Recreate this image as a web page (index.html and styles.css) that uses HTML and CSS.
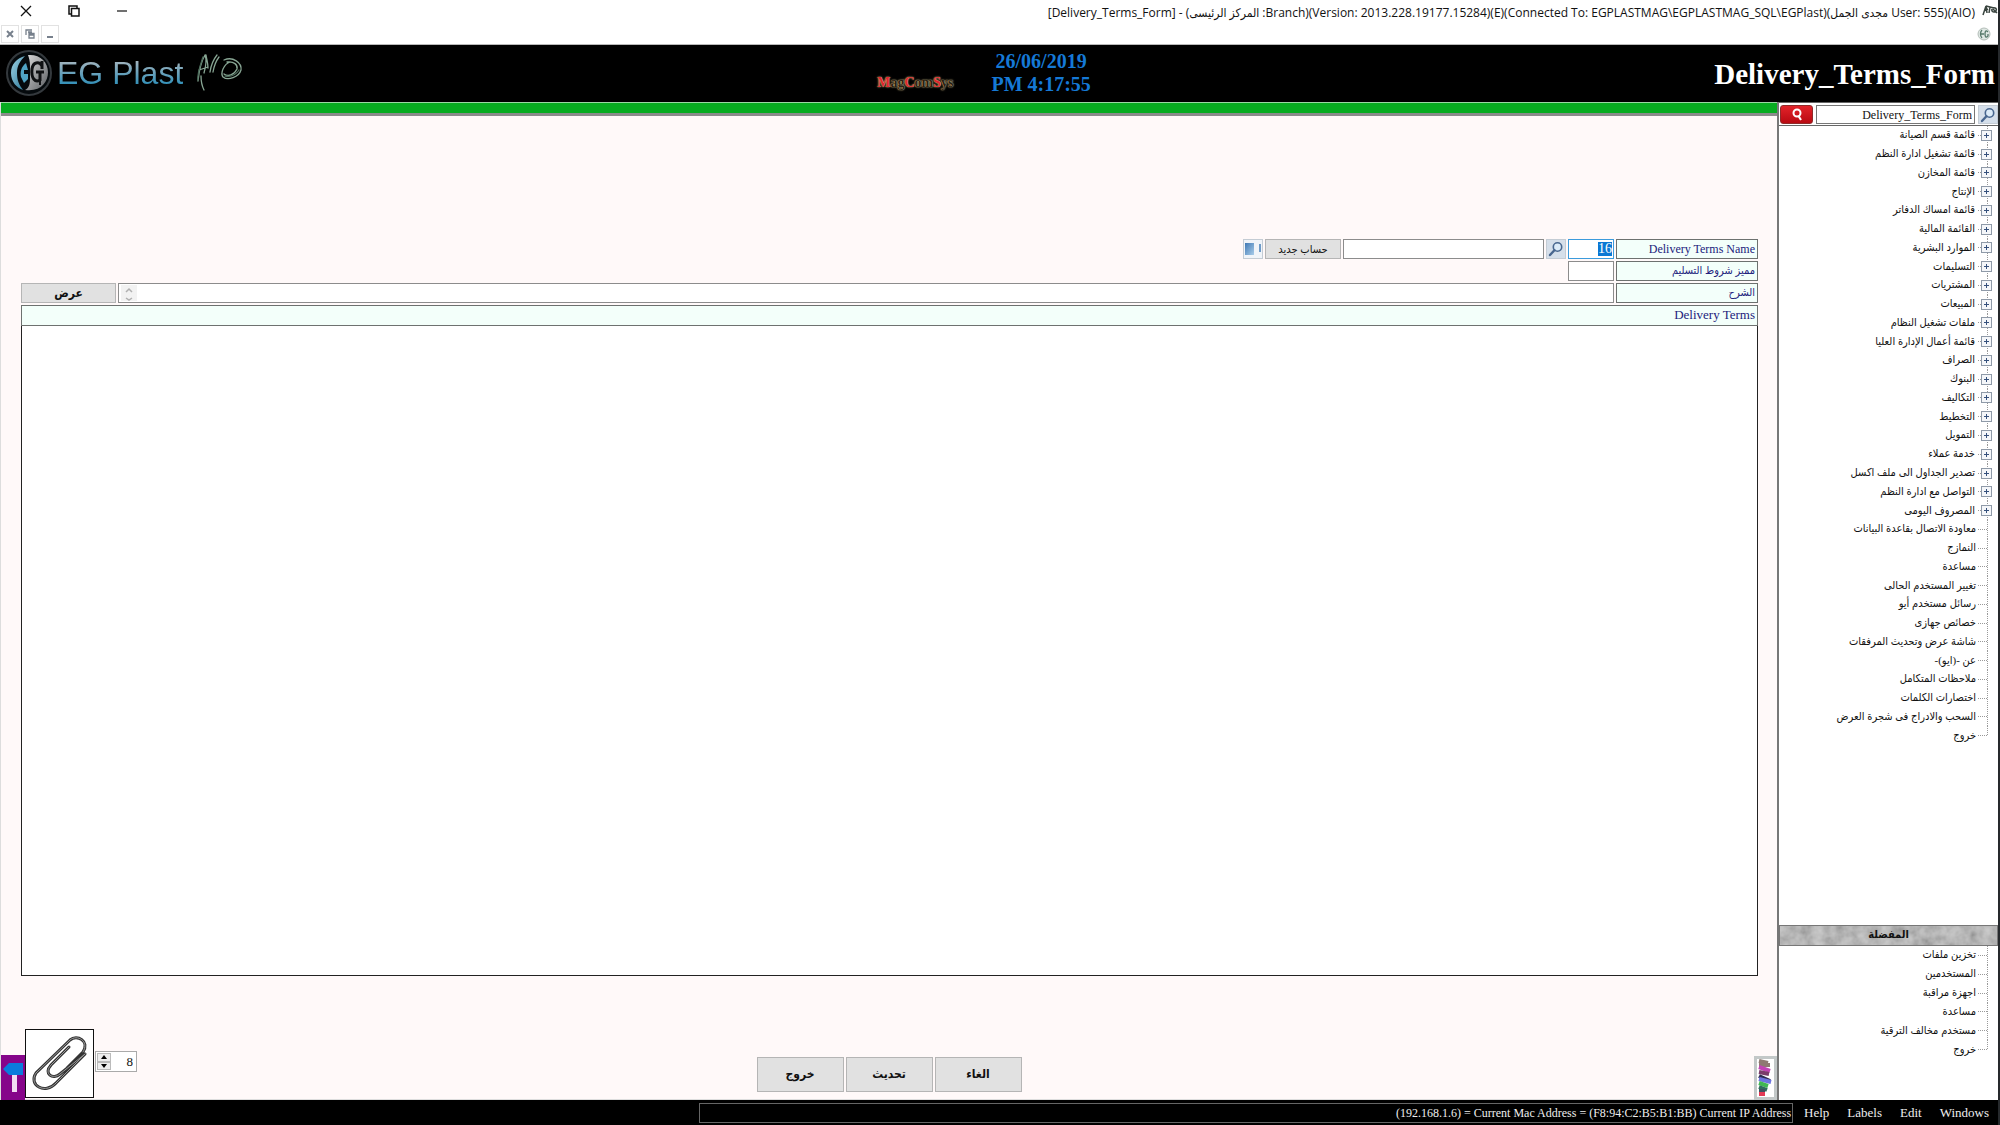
FILE: index.html
```html
<!DOCTYPE html>
<html lang="ar">
<head>
<meta charset="utf-8">
<title>Delivery_Terms_Form</title>
<link rel="stylesheet" href="styles.css">
</head>
<body>
<svg class="defs" aria-hidden="true">
  <symbol id="lens" viewBox="0 0 16 16">
    <circle cx="9.5" cy="6" r="4.2" fill="#dcebf8" stroke="#49678f" stroke-width="1.6"/>
    <path d="M6.4 9.2 2 14" stroke="#49678f" stroke-width="2.4" stroke-linecap="round"/>
  </symbol>
</svg>

<header class="titlebar">
  <div class="window-controls">
    <button aria-label="Close"><svg width="12" height="12" viewBox="0 0 12 12"><path d="M1 1 11 11M11 1 1 11" stroke="#111" stroke-width="1.3"/></svg></button>
    <button aria-label="Restore"><svg width="12" height="12" viewBox="0 0 12 12" fill="none" stroke="#111" stroke-width="1.5"><path d="M3 9H1V1h8v2"/><path d="M3.500 3.500h7.500v7.500h-7.500z"/></svg></button>
    <button aria-label="Minimize"><svg width="12" height="12" viewBox="0 0 12 12"><path d="M1 6h10" stroke="#111" stroke-width="1.2"/></svg></button>
  </div>
  <h1 class="window-title">[Delivery_Terms_Form] - (المركز الرئيسى :Branch)(Version: 2013.228.19177.15284)(E)(Connected To: EGPLASTMAG\EGPLASTMAG_SQL\EGPlast)(مجدى الجمل User: 555)(AIO)</h1>
  <svg class="app-icon" width="16" height="16" viewBox="0 0 16 16" fill="none" stroke="#39443f" stroke-width="1.500"><path d="M1 12 4 3l1 7M2 8l4-2M7 10 8 4M10 5c4-1 5 1 4 3s-5 1-4-2M4 3l8 2M11 6l4 4"/></svg>
</header>

<div class="mdi-bar">
  <div class="mdi-controls">
    <button aria-label="Close form"><svg width="10" height="10" viewBox="0 0 10 10"><path d="M2 2l6 6M8 2 2 8" stroke="#77808c" stroke-width="2"/></svg></button>
    <button aria-label="Restore form"><svg width="10" height="10" viewBox="0 0 10 10" fill="none" stroke="#77808c" stroke-width="1.300"><path d="M1 6V1h6M3 3h4M4 4.500h5V9H4zM4 6h5"/></svg></button>
    <button aria-label="Minimize form"><svg width="10" height="10" viewBox="0 0 10 10"><path d="M2 8h6" stroke="#77808c" stroke-width="2"/></svg></button>
  </div>
  <svg width="14" height="14" viewBox="0 0 14 14"><circle cx="7" cy="7" r="6" fill="#dfe8e4" stroke="#b4beb9"/><path d="M5 3c-2 2-2 6 0 8M3 7h4M11 5c-2-2-3-1-3 2s1 4 3 2V7" fill="none" stroke="#55786a" stroke-width="1.300"/></svg>
</div>

<div class="banner">
  <div class="brand">
    <svg width="48" height="48" viewBox="0 0 48 48">
      <defs>
        <linearGradient id="half" x1="0" y1="0" x2="1" y2="1"><stop offset="0" stop-color="#9fd4e6"/><stop offset="1" stop-color="#2a7797"/></linearGradient>
        <linearGradient id="steel" x1="0" y1="0" x2="1" y2="1"><stop offset="0" stop-color="#dcdcdc"/><stop offset="1" stop-color="#5c5f63"/></linearGradient>
      </defs>
      <circle cx="24" cy="24" r="22" fill="#050a0d" stroke="#34393d" stroke-width="2"/>
      <path d="M20 7C12 9 6 15 6 24s6 15 12 17c-4-5-6-10-6-17S15 12 20 7z" fill="url(#half)"/>
      <path d="M23 6c12-1 20 7 20 17S36 43 20 41c4-2 5-6 5-11V17c0-5-1-8-2-11z" fill="url(#steel)"/>
      <path d="M21 14c-5 4-6 9-5 14l3 6 4-4v-5h-4v-4h4z" fill="#4fa3c4"/>
      <path d="M37 17c-3-5-9-4-10 3-1 9 3 14 8 11v-8M31 23h8M37 12v8" fill="none" stroke="#101214" stroke-width="3"/>
      <path d="M35 31v5" stroke="#101214" stroke-width="2"/>
    </svg>
    <span class="brand-name">EG Plast</span>
    <svg width="48" height="42" viewBox="0 0 48 42" fill="none" stroke="#87a593" stroke-width="1.300" stroke-linecap="round">
      <path d="M2 29C3 20 6 8 9 3M9 3c2 5 1 11-1 18M5 24C5 29 6 34 8 38M3 18l9-3M10 3c1 6 2 8 2 13M14 20c1-7 3-12 7-17M17 20c1-6 3-11 6-15M28 8c9-4 18 3 17 10-2 7-13 11-18 7-3-4 1-13 7-15M31 10c7-1 11 3 10 7-3 6-9 8-13 5"/>
      <path d="M7 5c-3 9-6 17-5 23M43 18c-4 6-9 7-14 6" stroke="#4c6c5b"/>
    </svg>
  </div>
  <div class="banner-middle">
    <span class="vendor"><b>M</b>ag<b>C</b>om<b>S</b>ys</span>
    <time class="clock" datetime="2019-06-26T16:17:55">26/06/2019<br>PM 4:17:55</time>
  </div>
  <h2 class="form-title">Delivery_Terms_Form</h2>
</div>

<div class="workspace">
  <main class="panel">
    <div class="progress"></div>
    <form class="form" dir="rtl">
      <div class="row">
        <label class="field-label latin" for="code">Delivery Terms Name</label>
        <input class="code selected" id="code" value="16">
        <button class="icon-button" type="button" aria-label="Find"><svg width="16" height="16"><use href="#lens"/></svg></button>
        <input class="name" aria-label="Delivery terms name">
        <button class="new-account" type="button">حساب جديد</button>
        <button class="icon-button" type="button" aria-label="Panel"><svg width="18" height="18" viewBox="0 0 18 18"><defs><linearGradient id="pane" x1="0" y1="0" x2="1" y2="1"><stop offset="0" stop-color="#3f78b4"/><stop offset="1" stop-color="#a9cdea"/></linearGradient></defs><path d="M0 0h18v18H0z" fill="#f0f4f9"/><path d="M1 3h9v12H1z" fill="url(#pane)"/><path d="M16 4v8" stroke="#6f9bc8" stroke-width="2"/></svg></button>
      </div>
      <div class="row">
        <label class="field-label" for="mark">مميز شروط التسليم</label>
        <input class="code" id="mark">
      </div>
      <div class="row">
        <label class="field-label" for="desc">الشرح</label>
        <div class="memo">
          <input id="desc">
          <svg width="16" height="16" viewBox="0 0 16 16" fill="none" stroke="#b0b0b0" stroke-width="1.500"><path d="M0 0h16v16H0z" fill="#f2f2f2" stroke="none"/><path d="M5 7l3-3 3 3M5 13l3 2 3-2"/></svg>
        </div>
        <button class="show" type="button">عرض</button>
      </div>
      <label class="band" for="terms">Delivery Terms</label>
      <textarea class="terms" id="terms"></textarea>
    </form>
    <div class="toolbar">
      <div class="attachments">
        <button class="pin" aria-label="Pin"><svg width="24" height="45" viewBox="0 0 24 45"><path d="M2 14 8 8h14v12H8z" fill="#0a7bdc"/><path d="M11 20h5v17h-5z" fill="#f2dcf2"/></svg></button>
        <button class="clip" aria-label="Attachments"><svg width="66" height="66" viewBox="0 0 66 66" fill="none" stroke-linecap="round"><path d="M42 16 24 34c-8 9 2 15 9 9L58 23M58 23 29 52C18 64 1 54 9 42L43 9c7-6 20 1 13 12L40 37" stroke="#333" stroke-width="3"/><path d="M42 16 24 34c-8 9 2 15 9 9L58 23M58 23 29 52C18 64 1 54 9 42L43 9c7-6 20 1 13 12" stroke="#999" stroke-width="1"/></svg></button>
        <div class="spinner">
          <div class="steps">
            <button aria-label="Up"><svg width="6" height="4" viewBox="0 0 6 4"><path d="M0 4 3 0l3 4z"/></svg></button>
            <button aria-label="Down"><svg width="6" height="4" viewBox="0 0 6 4"><path d="M0 0h6L3 4z"/></svg></button>
          </div>
          <input aria-label="Copies" value="8">
        </div>
      </div>
      <div class="actions">
        <button>خروج</button>
        <button>تحديث</button>
        <button>الغاء</button>
      </div>
      <button class="palette" aria-label="Colours"><svg width="16" height="38" viewBox="0 0 16 38" fill="none" stroke-width="4"><path d="M1 2l9 2M1 6l11 0" stroke="#8f7a72"/><path d="M1 8l11 4" stroke="#c244b4"/><path d="M1 13l10 2" stroke="#7a3d6a"/><path d="M1 17l11 5" stroke="#2d2c50"/><path d="M1 20l12 3" stroke="#6d74e0"/><path d="M1 24l9 3" stroke="#41b852"/><path d="M1 28l8 3" stroke="#2f6d5c"/><path d="M1 32h6" stroke="#3c5360"/><path d="M1 35l6 0" stroke="#e23a55"/></svg></button>
    </div>
  </main>

  <aside class="sidebar">
    <div class="search">
      <button class="go" aria-label="Search"><svg width="14" height="14" viewBox="0 0 14 14" fill="none" stroke="#fff" stroke-width="2"><circle cx="7" cy="5" r="3.500"/><path d="M8.500 8 11 12"/></svg></button>
      <input aria-label="Form name" value="Delivery_Terms_Form">
      <button class="icon-button" aria-label="Lookup"><svg width="16" height="16"><use href="#lens"/></svg></button>
    </div>
    <ul class="tree main-tree" dir="rtl">
      <li class="branch"><a href="#">قائمة قسم الصيانة</a></li>
      <li class="branch"><a href="#">قائمة تشغيل ادارة النظم</a></li>
      <li class="branch"><a href="#">قائمة المخازن</a></li>
      <li class="branch"><a href="#">الإنتاج</a></li>
      <li class="branch"><a href="#">قائمة امساك الدفاتر</a></li>
      <li class="branch"><a href="#">القائمة المالية</a></li>
      <li class="branch"><a href="#">الموارد البشرية</a></li>
      <li class="branch"><a href="#">التسليمات</a></li>
      <li class="branch"><a href="#">المشتريات</a></li>
      <li class="branch"><a href="#">المبيعات</a></li>
      <li class="branch"><a href="#">ملفات تشغيل النظام</a></li>
      <li class="branch"><a href="#">قائمة أعمال الإدارة العليا</a></li>
      <li class="branch"><a href="#">الصراف</a></li>
      <li class="branch"><a href="#">البنوك</a></li>
      <li class="branch"><a href="#">التكاليف</a></li>
      <li class="branch"><a href="#">التخطيط</a></li>
      <li class="branch"><a href="#">التمويل</a></li>
      <li class="branch"><a href="#">خدمة عملاء</a></li>
      <li class="branch"><a href="#">تصدير الجداول الى ملف اكسل</a></li>
      <li class="branch"><a href="#">التواصل مع ادارة النظم</a></li>
      <li class="branch"><a href="#">المصروف اليومى</a></li>
      <li><a href="#">معاودة الاتصال بقاعدة البيانات</a></li>
      <li><a href="#">النمازج</a></li>
      <li><a href="#">مساعدة</a></li>
      <li><a href="#">تغيير المستخدم الحالى</a></li>
      <li><a href="#">رسائل مستخدم أيو</a></li>
      <li><a href="#">خصائص جهازى</a></li>
      <li><a href="#">شاشة عرض وتحديث المرفقات</a></li>
      <li><a href="#">عن -(ايو)-</a></li>
      <li><a href="#">ملاحظات المتكامل</a></li>
      <li><a href="#">اختصارات الكلمات</a></li>
      <li><a href="#">السحب والادراج فى شجرة العرض</a></li>
      <li><a href="#">خروج</a></li>
    </ul>
    <h3 class="favourites-title">
      <svg class="granite" aria-hidden="true"><filter id="stone"><feTurbulence type="fractalNoise" baseFrequency="0.09" numOctaves="3" seed="4"/><feColorMatrix values="0.4 0 0 0 0.42  0.4 0 0 0 0.42  0.4 0 0 0 0.42  0 0 0 0 1" color-interpolation-filters="sRGB"/></filter><rect width="100%" height="100%" filter="url(#stone)"/></svg>
      <span>المفضلة</span>
    </h3>
    <ul class="tree favourites" dir="rtl">
      <li><a href="#">تخزين ملفات</a></li>
      <li><a href="#">المستخدمين</a></li>
      <li><a href="#">اجهزة مراقبة</a></li>
      <li><a href="#">مساعدة</a></li>
      <li><a href="#">مستخدم مخالف الترقية</a></li>
      <li><a href="#">خروج</a></li>
    </ul>
  </aside>
</div>

<footer class="statusbar">
  <output class="status">(192.168.1.6) = Current Mac Address = (F8:94:C2:B5:B1:BB) Current IP Address</output>
  <nav class="menu">
    <a href="#">Help</a>
    <a href="#">Labels</a>
    <a href="#">Edit</a>
    <a href="#">Windows</a>
  </nav>
</footer>
</body>
</html>
```
FILE: styles.css
```css
* { box-sizing: border-box; }

body {
  margin: 0;
  min-height: 100vh;
  display: flex;
  flex-direction: column;
  border-right: 2px solid #26292c;
  background: #fff;
  font: 14px/18px "Liberation Serif", "DejaVu Sans Condensed", "DejaVu Sans", serif;
  color: #111;
}

button, input, textarea {
  font: inherit;
  color: inherit;
  margin: 0;
  padding: 0;
  border: 0;
  border-radius: 0;
  background: none;
  min-width: 0;
}
button { display: flex; align-items: center; justify-content: center; }
a { color: inherit; text-decoration: none; }
h1, h2, h3, ul { margin: 0; padding: 0; font-weight: normal; }
svg { display: block; flex: none; }
.defs { position: absolute; width: 0; height: 0; }

/* window chrome */
.titlebar { display: flex; align-items: center; height: 24px; padding: 0 0 2px 20px; gap: 7px; }
.window-controls { display: flex; gap: 36px; }
.window-title { flex: 1; padding-top: 4px; text-align: right; font: 12px/20px "Open Sans", "DejaVu Sans Condensed", "DejaVu Sans", sans-serif; white-space: nowrap; }
.mdi-bar { display: flex; align-items: center; justify-content: space-between; height: 21px; padding: 0 7px 0 1px; border-bottom: 1px solid #b9b9b9; }
.mdi-controls { display: flex; gap: 2px; }
.mdi-controls button { width: 18px; height: 18px; border: 1px solid #e2e2e2; }

/* banner */
.banner { display: grid; grid-template-columns: 1fr auto 1fr; align-items: center; height: 57px; padding: 0 3px 0 5px; background: #000; }
.brand { display: flex; align-items: center; gap: 4px; padding-bottom: 2px; }
.brand-name {
  margin-right: 9px;
  font: 32px/40px "Liberation Sans", sans-serif;
  color: transparent;
  background: linear-gradient(#a3b4be 20%, #2f8fb8 80%);
  background-clip: text;
}
.banner-middle { display: flex; align-items: center; gap: 38px; padding: 0 32px 2px 0; }
.vendor { padding-top: 20px; font: bold 14px/20px "Liberation Serif", serif; color: #2b2012; text-shadow: 0 0 1px #d8c58c, 0 0 2px #d8c58c; }
.vendor b { color: #e0262c; }
.clock { text-align: center; font: bold 20px/23px "Liberation Serif", serif; color: #1579d6; }
.form-title { text-align: right; font: bold 29px/40px "Liberation Serif", serif; color: #fff; }

/* workspace */
.workspace { flex: 1; display: flex; }
.panel { flex: 1; display: flex; flex-direction: column; background: #fff9f9; border-left: 1px solid #ddd; }
.progress { height: 14px; background: #07ac20; border-top: 1px solid #9bd8a3; border-bottom: 3px solid #8b8b8b; }
.form { flex: 1; display: flex; flex-direction: column; gap: 2px; padding: 123px 19px 53px 20px; }
.row { display: flex; gap: 2px; height: 20px; }
.field-label, .band { padding: 0 2px; background: #f3fffa; border: 1px solid #6d716f; color: #22227c; }
.field-label { width: 142px; font-size: 11px; line-height: 16px; }
.field-label.latin { font-size: 12px; line-height: 18px; }
.row input { border: 1px solid #8c8c8c; background: #fff; }
.row .code { width: 46px; padding: 0 1px; }
.row .selected { border-color: #3b9bdc; color: #fff; background: linear-gradient(#0a78d4, #0a78d4) right 1px center / 14px 14px no-repeat #fff; }
.row .name { width: 201px; }
.icon-button { width: 20px; background: #d5dfea; border: 1px solid #c4ccd4; }
.new-account, .show, .actions button { background: #e1e1e1; border: 1px solid #b5b5b5; }
.new-account { width: 76px; font-size: 11px; }
.memo { flex: 1; display: flex; align-items: center; padding-left: 2px; background: #fff; border: 1px solid #8c8c8c; }
.memo input { flex: 1; border: 0; }
.show { width: 95px; font-weight: bold; font-size: 12px; }
.band { height: 21px; font-size: 13px; }
.terms { flex: 1; margin-top: -2px; background: #fff; border: 1px solid #222; border-top: 0; resize: none; }

.toolbar { display: grid; grid-template-columns: 1fr auto 1fr; align-items: end; height: 71px; border-bottom: 1px solid #ddd; }
.attachments { display: flex; align-items: end; }
.pin { width: 24px; height: 45px; background: #86058a; }
.clip { width: 69px; height: 69px; margin-bottom: 2px; background: #fff; border: 1px solid #111; }
.spinner { display: flex; gap: 1px; width: 42px; height: 21px; margin: 0 0 28px 1px; padding: 1px; background: #fff; border: 1px solid #aaa; }
.spinner input { flex: 1; width: 0; text-align: right; padding-right: 2px; font-size: 13px; }
.steps { display: grid; width: 14px; }
.steps button { background: #eee; border: 1px solid #bbb; }
.actions { display: flex; gap: 2px; margin-bottom: 8px; }
.actions button { width: 87px; height: 35px; padding-bottom: 2px; font-weight: bold; font-size: 12px; }
.palette { justify-self: end; width: 23px; height: 44px; background: #fff; border: 3px solid #c3c8c8; }

/* sidebar */
.sidebar { width: 221px; display: flex; flex-direction: column; border-left: 2px solid #777; }
.search { display: flex; gap: 3px; height: 24px; padding: 2px 0 1px 1px; border: solid #666; border-width: 1px 0; }
.search .go { width: 33px; background: linear-gradient(#e2232a, #b90a12); border: 1px solid #8f2a2a; border-radius: 3px; }
.search input { flex: 1; text-align: right; padding-right: 2px; border: 1px solid #777; font-size: 12px; }
.tree { list-style: none; display: grid; grid-auto-rows: 1fr; font-size: 11px; line-height: 16px; }
.main-tree { height: 619px; margin-bottom: auto; }
.tree li {
  display: flex;
  align-items: center;
  margin-right: 10px;
  padding-right: 12px;
  background:
    repeating-linear-gradient(#999 0 1px, transparent 1px 2px) right top / 1px 100% no-repeat,
    repeating-linear-gradient(90deg, #999 0 1px, transparent 1px 2px) right center / 10px 1px no-repeat;
}
.tree a { margin-bottom: 2px; }
.branch::before {
  content: "";
  width: 9px;
  height: 9px;
  margin-right: -16px;
  margin-left: 6px;
  border: 1px solid #8f9aa8;
  background:
    linear-gradient(#35507c, #35507c) center / 5px 1px no-repeat,
    linear-gradient(#35507c, #35507c) center / 1px 5px no-repeat,
    #f4f6f9;
}
.tree li:last-child { background-size: 1px 50%, 10px 1px; }
.favourites-title { position: relative; height: 21px; text-align: center; font-weight: bold; font-size: 11px; line-height: 16px; border: 1px solid #777; }
.granite { position: absolute; inset: 0; width: 100%; height: 100%; }
.favourites-title span { position: relative; }
.favourites { height: 113px; margin-bottom: 41px; }

/* status bar */
.statusbar { display: flex; justify-content: flex-end; align-items: center; gap: 11px; height: 25px; padding-right: 9px; background: #000; color: #eee; }
.status { flex: 0 1 1094px; height: 20px; border: 1px solid #666; padding-right: 1px; text-align: right; font-size: 12px; }
.menu { display: flex; gap: 18px; font-size: 13px; }
```
